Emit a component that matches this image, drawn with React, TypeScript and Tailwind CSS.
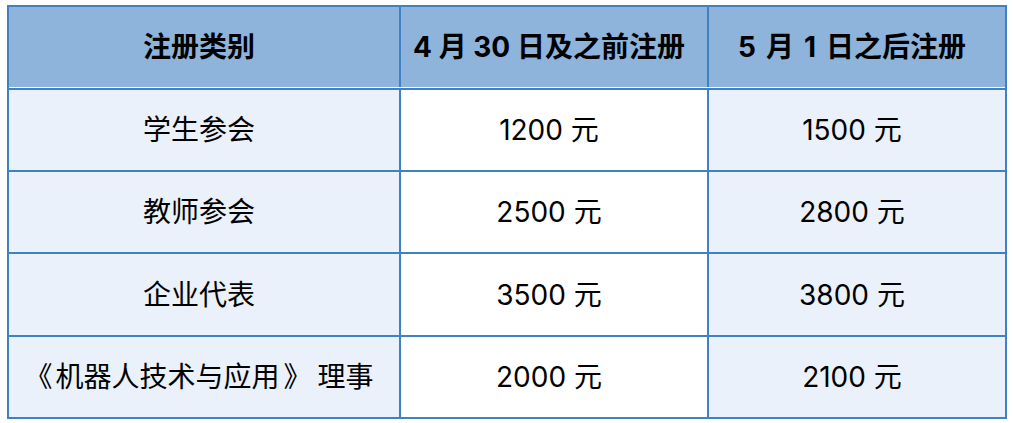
const rows = [
  { name: "学生参会", early: "1200 元", late: "1500 元" },
  { name: "教师参会", early: "2500 元", late: "2800 元" },
  { name: "企业代表", early: "3500 元", late: "3800 元" },
  { name: "journal", early: "2000 元", late: "2100 元" },
];

const rowHeights = ["h-[82px]", "h-[82px]", "h-[83px]", "h-[82px]"];

function JournalName() {
  // brackets get a little breathing room, like the source font
  return (
    <span className="flex">
      <span className="mr-[3px]">《</span>
      <span>机器人技术与应用</span>
      <span className="ml-[4px] mr-[6px]">》</span>
      <span>理事</span>
    </span>
  );
}

export default function App() {
  return (
    <div
      className="min-h-screen bg-white pt-[5px] pl-[7px] text-black"
      style={{ fontFamily: '"Inter", "Noto Sans CJK SC", sans-serif' }}
    >
      <div className="w-[1000px] border-2 border-[#3f82c4] text-[28px] leading-none">
        <div className="grid h-[81px] grid-cols-[390px_308px_298px] border-b border-white bg-[#8eb4dc] font-bold">
          <div className="flex items-center justify-center pr-[10px]">注册类别</div>
          <div className="flex items-center justify-center border-l-2 border-[#3f82c4] pr-[10px]">
            4 月 30 日及之前注册
          </div>
          <div className="flex items-center justify-center border-l-2 border-[#3f82c4] pr-[10px]">
            <span className="flex gap-[10px]">
              <span>5</span>
              <span>月</span>
              <span>1</span>
              <span>日之后注册</span>
            </span>
          </div>
        </div>
        {rows.map((r, i) => (
          <div
            key={r.name}
            className={`grid grid-cols-[390px_308px_298px] border-t-2 border-[#3f82c4] ${rowHeights[i]}`}
          >
            <div className="flex items-center justify-center bg-[#eaf1fa] pr-[10px]">
              {r.name === "journal" ? <JournalName /> : r.name}
            </div>
            <div className="flex items-center justify-center border-l-2 border-[#3f82c4] bg-white pr-[10px]">
              {r.early}
            </div>
            <div className="flex items-center justify-center border-l-2 border-[#3f82c4] bg-[#eaf1fa] pr-[10px]">
              {r.late}
            </div>
          </div>
        ))}
      </div>
    </div>
  );
}
